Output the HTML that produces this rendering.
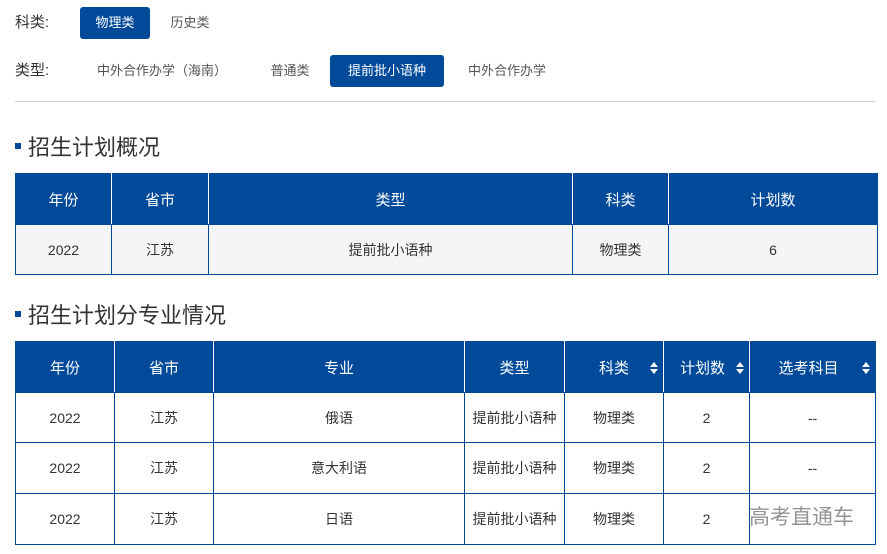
<!DOCTYPE html>
<html><head><meta charset="utf-8"><style>
*{margin:0;padding:0;box-sizing:border-box}
body{width:887px;height:554px;background:#fff;font-family:"Liberation Sans","Noto Sans CJK SC",sans-serif;color:#333;position:relative;overflow:hidden}
.a{position:absolute}
.lbl{font-size:15px;color:#333}
.btn{position:absolute;height:32px;line-height:32px;font-size:13px;color:#555;text-align:center;border-radius:3px}
.btn.on{background:#004a99;color:#fff}
.h{position:absolute;font-size:22px;color:#333;left:28px}
.sq{position:absolute;left:15px;width:6px;height:6px;background:#004a99}
table{position:absolute;border-collapse:collapse;table-layout:fixed;left:15px}
td,th{text-align:center;font-size:14px;border:1px solid #004a99;color:#333;font-weight:normal}
th{background:#004a99;color:#fff;font-size:15px;border-color:#fff;border-top-color:#004a99;border-bottom-color:#004a99}
th:first-child{border-left-color:#004a99}th:last-child{border-right-color:#004a99}
.s{position:relative}
.s svg{position:absolute;right:5px;top:20px}
</style></head><body>
<div class="a lbl" style="left:15px;top:11px">科类:</div>
<div class="btn on" style="left:80px;top:7px;width:70px">物理类</div>
<div class="btn" style="left:155px;top:7px;width:70px">历史类</div>
<div class="a lbl" style="left:15px;top:59px">类型:</div>
<div class="btn" style="left:82px;top:55px;width:160px">中外合作办学（海南）</div>
<div class="btn" style="left:255px;top:55px;width:70px">普通类</div>
<div class="btn on" style="left:330px;top:55px;width:114px">提前批小语种</div>
<div class="btn" style="left:452px;top:55px;width:110px">中外合作办学</div>
<div class="a" style="left:15px;top:101px;width:860px;height:1px;background:#ccc"></div>
<div class="sq" style="top:143px"></div><div class="h" style="top:130px">招生计划概况</div>
<table style="top:173px;width:862px">
<colgroup><col style="width:96px"><col style="width:97px"><col style="width:364px"><col style="width:96px"><col style="width:209px"></colgroup>
<tr style="height:51px"><th>年份</th><th>省市</th><th>类型</th><th>科类</th><th>计划数</th></tr>
<tr style="height:50px;background:#f5f5f5"><td>2022</td><td>江苏</td><td>提前批小语种</td><td>物理类</td><td>6</td></tr>
</table>
<div class="sq" style="top:311px"></div><div class="h" style="top:298px">招生计划分专业情况</div>
<table style="top:341px;width:860px">
<colgroup><col style="width:99px"><col style="width:99px"><col style="width:251px"><col style="width:100px"><col style="width:99px"><col style="width:86px"><col style="width:126px"></colgroup>
<tr style="height:51px"><th>年份</th><th>省市</th><th>专业</th><th>类型</th>
<th class="s">科类<svg width="8" height="12"><path d="M0 5L4 0L8 5Z M0 7L4 12L8 7Z" fill="#fff"/></svg></th>
<th class="s" style="padding-right:8px">计划数<svg width="8" height="12"><path d="M0 5L4 0L8 5Z M0 7L4 12L8 7Z" fill="#fff"/></svg></th>
<th class="s" style="padding-right:8px">选考科目<svg width="8" height="12"><path d="M0 5L4 0L8 5Z M0 7L4 12L8 7Z" fill="#fff"/></svg></th></tr>
<tr style="height:50px"><td>2022</td><td>江苏</td><td>俄语</td><td>提前批小语种</td><td>物理类</td><td>2</td><td>--</td></tr>
<tr style="height:51px"><td>2022</td><td>江苏</td><td>意大利语</td><td>提前批小语种</td><td>物理类</td><td>2</td><td>--</td></tr>
<tr style="height:51px"><td>2022</td><td>江苏</td><td>日语</td><td>提前批小语种</td><td>物理类</td><td>2</td><td></td></tr>
</table>
<div class="a" style="left:749px;top:501px;font-size:21px;color:rgba(120,120,120,0.8)">高考直通车</div>
</body></html>
